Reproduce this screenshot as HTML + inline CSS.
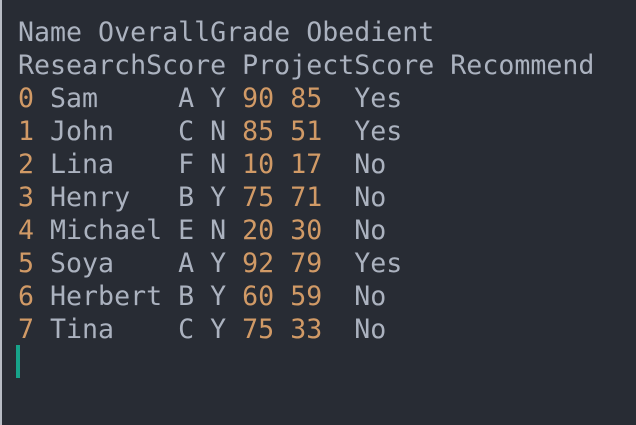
<!DOCTYPE html>
<html><head><style>
html,body{margin:0;padding:0;}
body{width:636px;height:425px;background:#282c34;position:relative;overflow:hidden;}
.bl{position:absolute;left:0;top:0;width:2px;height:425px;background:#b8bcc4;}
pre{position:absolute;left:18px;top:17px;margin:0;font-family:"DejaVu Sans Mono","Liberation Mono",monospace;font-size:26.6px;line-height:32.95px;color:#abb2bf;}
.o{color:#d19a66;}
.cur{position:absolute;left:16px;top:345px;width:4px;height:33px;background:#17a38a;}
</style></head><body>
<div class="bl"></div>
<pre>Name OverallGrade Obedient
ResearchScore ProjectScore Recommend
<span class="o">0</span> Sam     A Y <span class="o">90</span> <span class="o">85</span>  Yes
<span class="o">1</span> John    C N <span class="o">85</span> <span class="o">51</span>  Yes
<span class="o">2</span> Lina    F N <span class="o">10</span> <span class="o">17</span>  No
<span class="o">3</span> Henry   B Y <span class="o">75</span> <span class="o">71</span>  No
<span class="o">4</span> Michael E N <span class="o">20</span> <span class="o">30</span>  No
<span class="o">5</span> Soya    A Y <span class="o">92</span> <span class="o">79</span>  Yes
<span class="o">6</span> Herbert B Y <span class="o">60</span> <span class="o">59</span>  No
<span class="o">7</span> Tina    C Y <span class="o">75</span> <span class="o">33</span>  No</pre>
<div class="cur"></div>
</body></html>
